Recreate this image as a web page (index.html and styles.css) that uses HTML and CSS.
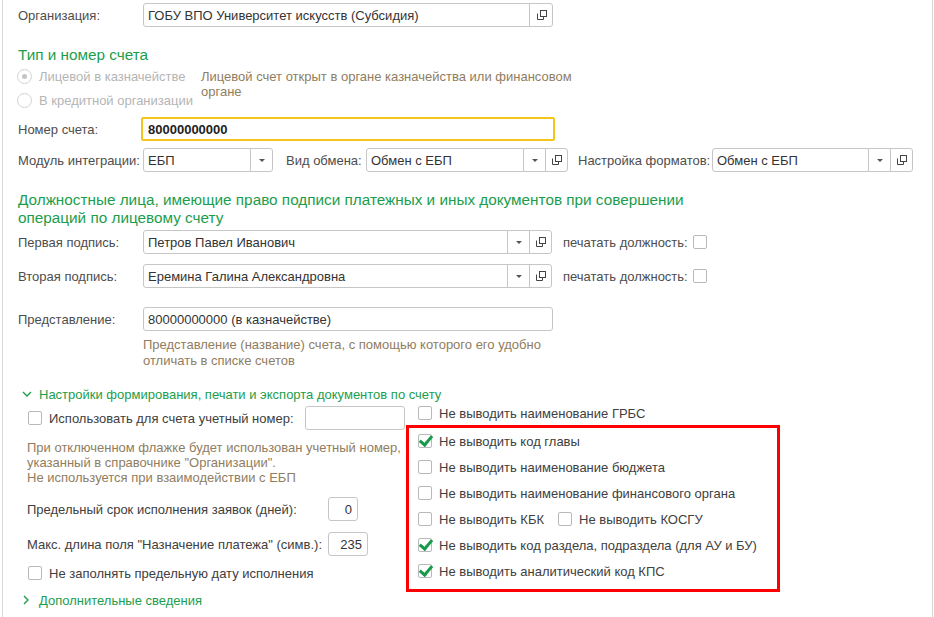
FILE: index.html
```html
<!DOCTYPE html>
<html lang="ru">
<head>
<meta charset="utf-8">
<title>Счет организации</title>
<link rel="stylesheet" href="styles.css">
</head>
<body>
<div class="frame">

  <div class="row r-org">
    <span class="label">Организация:</span>
    <div class="field w-org">
      <span class="val">ГОБУ ВПО Университет искусств (Субсидия)</span>
      <span class="btn open"><svg viewBox="0 0 11 11"><rect x="4.5" y="0.5" width="6" height="6"/><path d="M1.5 3.5 V9.5 H7.5 V7"/></svg></span>
    </div>
  </div>

  <h2 class="group g1">Тип и номер счета</h2>
  <div class="acc-type">
    <div class="radios">
      <div class="radio on"><i></i>Лицевой в казначействе</div>
      <div class="radio"><i></i>В кредитной организации</div>
    </div>
    <div class="note">Лицевой счет открыт в органе казначейства или финансовом<br>органе</div>
  </div>

  <div class="row r-num">
    <span class="label">Номер счета:</span>
    <div class="field focus"><span class="val bold">80000000000</span></div>
  </div>

  <div class="row r-mod">
    <span class="label">Модуль интеграции:</span>
    <div class="field w-mod">
      <span class="val">ЕБП</span>
      <span class="btn drop"><b></b></span>
    </div>
    <span class="label l-vid">Вид обмена:</span>
    <div class="field w-vid">
      <span class="val">Обмен с ЕБП</span>
      <span class="btn drop"><b></b></span>
      <span class="btn open"><svg viewBox="0 0 11 11"><rect x="4.5" y="0.5" width="6" height="6"/><path d="M1.5 3.5 V9.5 H7.5 V7"/></svg></span>
    </div>
    <span class="label l-fmt">Настройка форматов:</span>
    <div class="field w-fmt">
      <span class="val">Обмен с ЕБП</span>
      <span class="btn drop"><b></b></span>
      <span class="btn open"><svg viewBox="0 0 11 11"><rect x="4.5" y="0.5" width="6" height="6"/><path d="M1.5 3.5 V9.5 H7.5 V7"/></svg></span>
    </div>
  </div>

  <h2 class="group g2">Должностные лица, имеющие право подписи платежных и иных документов при совершении<br>операций по лицевому счету</h2>

  <div class="row r-sign1">
    <span class="label">Первая подпись:</span>
    <div class="field w-sign">
      <span class="val">Петров Павел Иванович</span>
      <span class="btn drop"><b></b></span>
      <span class="btn open"><svg viewBox="0 0 11 11"><rect x="4.5" y="0.5" width="6" height="6"/><path d="M1.5 3.5 V9.5 H7.5 V7"/></svg></span>
    </div>
    <span class="label l-print">печатать должность:</span>
    <span class="check"></span>
  </div>

  <div class="row r-sign2">
    <span class="label">Вторая подпись:</span>
    <div class="field w-sign">
      <span class="val">Еремина Галина Александровна</span>
      <span class="btn drop"><b></b></span>
      <span class="btn open"><svg viewBox="0 0 11 11"><rect x="4.5" y="0.5" width="6" height="6"/><path d="M1.5 3.5 V9.5 H7.5 V7"/></svg></span>
    </div>
    <span class="label l-print">печатать должность:</span>
    <span class="check"></span>
  </div>

  <div class="row r-pres">
    <span class="label">Представление:</span>
    <div class="field w-org"><span class="val">80000000000 (в казначействе)</span></div>
  </div>
  <div class="note hint">Представление (название) счета, с помощью которого его удобно<br>отличать в списке счетов</div>

  <div class="section-head expanded">
    <svg viewBox="0 0 10 6"><path d="M1 1 L5 5 L9 1"/></svg>
    Настройки формирования, печати и экспорта документов по счету
  </div>

  <div class="settings">
    <div class="col-left">
      <div class="opt r-acc">
        <span class="check"></span>
        <span class="text">Использовать для счета учетный номер:</span>
        <div class="field w-acc"></div>
      </div>
      <div class="note acc-note">При отключенном флажке будет использован учетный номер,<br>указанный в справочнике "Организации".<br>Не используется при взаимодействии с ЕБП</div>
      <div class="opt r-term">
        <span class="text l-term">Предельный срок исполнения заявок (дней):</span>
        <div class="field num w-n1"><span class="val">0</span></div>
      </div>
      <div class="opt r-len">
        <span class="text l-term">Макс. длина поля "Назначение платежа" (симв.):</span>
        <div class="field num w-n2"><span class="val">235</span></div>
      </div>
      <div class="opt r-date">
        <span class="check"></span>
        <span class="text">Не заполнять предельную дату исполнения</span>
      </div>
    </div>

    <div class="col-right">
      <div class="opt first"><span class="check"></span><span class="text">Не выводить наименование ГРБС</span></div>
      <div class="marked">
        <div class="opt"><span class="check on"></span><span class="text">Не выводить код главы</span></div>
        <div class="opt"><span class="check"></span><span class="text">Не выводить наименование бюджета</span></div>
        <div class="opt"><span class="check"></span><span class="text">Не выводить наименование финансового органа</span></div>
        <div class="opt">
          <span class="check"></span><span class="text">Не выводить КБК</span>
          <span class="check second"></span><span class="text">Не выводить КОСГУ</span>
        </div>
        <div class="opt"><span class="check on"></span><span class="text">Не выводить код раздела, подраздела (для АУ и БУ)</span></div>
        <div class="opt"><span class="check on"></span><span class="text">Не выводить аналитический код КПС</span></div>
      </div>
    </div>
  </div>

  <div class="section-head more">
    <svg viewBox="0 0 6 10"><path d="M1 1 L5 5 L1 9"/></svg>
    Дополнительные сведения
  </div>

</div>
</body>
</html>
```

FILE: styles.css
```css
html, body {
	margin: 0;
	background: #fff;
}
body {
	font-family: "Liberation Sans", Arial, sans-serif;
	font-size: 13px;
	color: #4d4d4d;
}
.frame {
	margin-left: 2px;
	width: 931px;
	height: 617px;
	border-left: 1px solid #d9d9d9;
	border-right: 1px solid #d9d9d9;
	padding: 3px 0 0 15px;
	box-sizing: border-box;
	overflow: hidden;
}

/* rows of label + field */
.row {
	display: flex;
	align-items: center;
	height: 24px;
}
.label {
	width: 125px;
	flex: none;
	white-space: nowrap;
}
.field {
	position: relative;
	display: flex;
	align-items: center;
	height: 24px;
	box-sizing: border-box;
	border: 1px solid #c6c6c6;
	border-radius: 3px;
	background: #fff;
	color: #333;
	flex: none;
}
.field .val {
	flex: 1;
	padding-left: 4px;
	white-space: nowrap;
	overflow: hidden;
}
.val.bold {
	font-weight: bold;
	color: #222;
}
.btn {
	flex: none;
	width: 21px;
	height: 22px;
	border-left: 1px solid #c6c6c6;
	display: flex;
	align-items: center;
	justify-content: center;
}
.btn.drop b {
	width: 0;
	height: 0;
	border-left: 3px solid transparent;
	border-right: 3px solid transparent;
	border-top: 3px solid #555;
}
.btn.open svg {
	width: 11px;
	height: 11px;
	fill: none;
	stroke: #444;
	stroke-width: 1;
}

.w-org { width: 410px; }
.w-org .btn { width: 22px; }
.focus {
	width: 414px;
	margin-left: -2px;
	border: 2px solid #f4c51b;
	border-radius: 2px;
}
.focus .val { padding-left: 5px; }
.w-mod { width: 130px; }
.l-vid { width: 80px; margin-left: 13px; }
.w-vid { width: 202px; }
.l-fmt { width: 134px; margin-left: 10px; }
.w-fmt { width: 201px; }
.w-sign { width: 409px; }
.l-print { width: 130px; margin-left: 11px; }

/* group titles */
.group {
	margin: 0;
	font-weight: normal;
	font-size: 15.3px;
	color: #1c9d4c;
}
.g1 {
	margin-top: 18px;
	line-height: 20px;
}
.g2 {
	margin-top: 19px;
	line-height: 18px;
}

/* account type */
.acc-type {
	display: flex;
	margin-top: 3px;
}
.radios {
	width: 183px;
	flex: none;
}
.radio {
	display: flex;
	align-items: center;
	height: 16px;
	color: #b5b5b5;
	margin-left: -1px;
}
.radio + .radio { margin-top: 8px; }
.radio i {
	width: 13px;
	height: 13px;
	border: 1px solid #d2d2d2;
	border-radius: 50%;
	margin-right: 7px;
	position: relative;
	flex: none;
}
.radio.on i:after {
	content: "";
	position: absolute;
	left: 4px;
	top: 4px;
	width: 5px;
	height: 5px;
	border-radius: 50%;
	background: #c4c4c4;
}
.note {
	color: #8f7d61;
	line-height: 15px;
	padding-top: 1px;
}

.r-num { margin-top: 9px; }
.r-mod { margin-top: 7px; }
.r-sign1 { margin-top: 3px; }
.r-sign2 { margin-top: 10px; }
.r-pres { margin-top: 19px; }
.hint {
	margin: 5px 0 0 125px;
	line-height: 16px;
}

/* check boxes */
.check {
	position: relative;
	flex: none;
	width: 14px;
	height: 14px;
	box-sizing: border-box;
	border: 1px solid #b9b9b9;
	border-radius: 2px;
	background: #fff;
}
.check.on:after {
	content: "";
	position: absolute;
	left: 3px;
	top: -2px;
	width: 5px;
	height: 10px;
	border-right: 3px solid #17994a;
	border-bottom: 3px solid #17994a;
	transform: rotate(40deg);
}

/* collapsible groups */
.section-head {
	display: flex;
	align-items: center;
	height: 16px;
	color: #1c9d4c;
	margin-left: 4px;
}
.section-head svg {
	fill: none;
	stroke: #1c9d4c;
	stroke-width: 1.4;
	margin-right: 7px;
}
.expanded {
	margin-top: 17px;
}
.expanded svg {
	width: 10px;
	height: 6px;
}
.more svg {
	width: 6px;
	height: 10px;
	margin-right: 10px;
	margin-left: 1px;
}

.settings {
	display: flex;
	height: 192px;
	margin-top: -1px;
}
.col-left {
	width: 388px;
	flex: none;
	padding-top: 5px;
	padding-left: 9px;
	box-sizing: border-box;
}
.opt {
	display: flex;
	align-items: center;
	height: 24px;
	color: #404040;
	white-space: nowrap;
}
.opt .check { margin-right: 7px; }
.col-left .opt .check { margin-left: 1px; }
.w-acc {
	width: 100px;
	margin-left: 11px;
}
.acc-note {
	margin-top: 10px;
	padding-top: 0;
}
.r-term { margin-top: 12px; }
.r-len { margin-top: 11px; }
.r-date {
	margin-top: 9px;
	height: 16px;
}
.l-term { width: 301px; }
.num .val {
	text-align: right;
	padding: 0 5px 0 0;
}
.w-n1 { width: 30px; }
.w-n2 { width: 40px; }

.col-right {
	width: 374px;
	flex: none;
}
.col-right .first {
	padding-left: 12px;
}
.marked {
	border: 3px solid #f00;
	padding: 0 0 5px 9px;
}
.marked .opt { height: 26px; }
.check.second { margin-left: 14px; }

.more { margin-top: -1px; }
```
